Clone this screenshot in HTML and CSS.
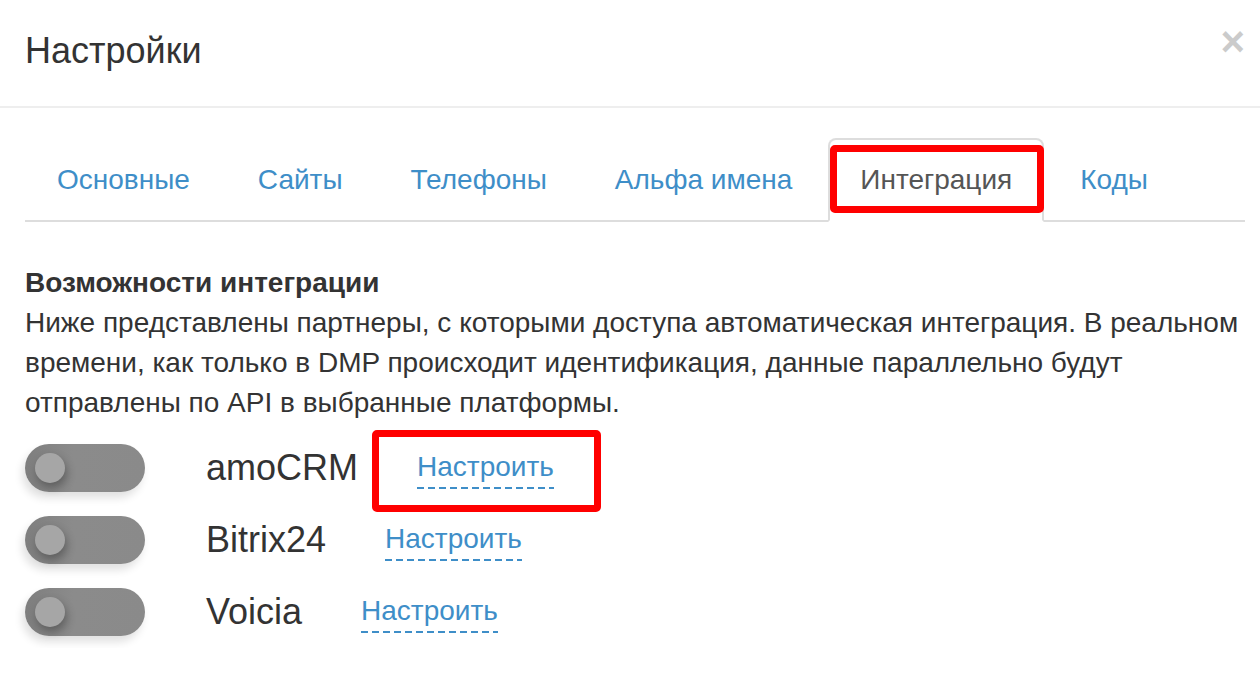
FILE: index.html
```html
<!DOCTYPE html>
<html lang="ru">
<head>
    <meta charset="UTF-8">
    <meta name="viewport" content="width=device-width, initial-scale=1.0">
    <title>Настройки</title>
    <link rel="stylesheet" href="styles.css">
</head>
<body>
<div class="modal">
    <div class="modal-header">
        <h4 class="modal-title">Настройки</h4>
        <button type="button" class="close">&times;</button>
    </div>

    <div class="modal-body">
        <ul class="nav-tabs">
            <li><a href="#">Основные</a></li>
            <li><a href="#">Сайты</a></li>
            <li><a href="#">Телефоны</a></li>
            <li><a href="#">Альфа имена</a></li>
            <li class="active"><a href="#">Интеграция</a><span class="mark mark-tab"></span></li>
            <li><a href="#">Коды</a></li>
        </ul>

        <div class="tab-content">
            <h5>Возможности интеграции</h5>
            <p>Ниже представлены партнеры, с которыми доступа автоматическая интеграция. В реальном времени, как только в DMP происходит идентификация, данные параллельно будут отправлены по API в выбранные платформы.</p>

            <div class="integrations">
                <div class="integration-row">
                    <label class="switch"><input type="checkbox"><span class="slider"></span></label>
                    <span class="partner">amoCRM</span>
                    <span class="setup-wrap">
                        <a href="#" class="setup">Настроить</a>
                        <span class="mark mark-link"></span>
                    </span>
                </div>
                <div class="integration-row">
                    <label class="switch"><input type="checkbox"><span class="slider"></span></label>
                    <span class="partner">Bitrix24</span>
                    <span class="setup-wrap"><a href="#" class="setup">Настроить</a></span>
                </div>
                <div class="integration-row">
                    <label class="switch"><input type="checkbox"><span class="slider"></span></label>
                    <span class="partner">Voicia</span>
                    <span class="setup-wrap"><a href="#" class="setup">Настроить</a></span>
                </div>
            </div>
        </div>
    </div>
</div>
</body>
</html>
```

FILE: styles.css
```css
* {
    margin: 0;
    padding: 0;
    box-sizing: border-box;
}

body {
    font-family: "Liberation Sans", Arial, sans-serif;
    font-size: 28px;
    line-height: 40px;
    color: #333;
    background: #fff;
}

/* шапка окна */
.modal-header {
    display: flex;
    justify-content: space-between;
    align-items: flex-start;
    padding: 25px 15px 29px 25px;
    border-bottom: 2px solid #eee;
}

.modal-title {
    font-size: 36px;
    line-height: 52px;
    font-weight: normal;
    color: #333;
}

.close {
    margin-top: -4px;
    border: 0;
    background: none;
    font-family: "Liberation Sans", Arial, sans-serif;
    font-size: 42px;
    font-weight: bold;
    line-height: 1;
    color: #000;
    opacity: 0.2;
    cursor: pointer;
}

.modal-body {
    padding: 30px 15px 0 25px;
}

/* вкладки */
.nav-tabs {
    display: flex;
    list-style: none;
    border-bottom: 2px solid #ddd;
}

.nav-tabs li {
    position: relative;
    margin-right: 4px;
    margin-bottom: -2px;
}

.nav-tabs li a {
    display: block;
    padding: 20px 30px;
    font-size: 28px;
    line-height: 40px;
    color: #3e8ec8;
    text-decoration: none;
    border: 2px solid transparent;
    border-radius: 8px 8px 0 0;
}

.nav-tabs li.active a {
    color: #555;
    background: #fff;
    border-color: #ddd #ddd transparent;
}

/* красные рамки-пометки поверх скриншота */
.mark {
    position: absolute;
    border: 7px solid #f00;
    border-radius: 5px;
    pointer-events: none;
}

.mark-tab {
    top: 7px;
    left: 2px;
    right: 0;
    bottom: 9px;
}

.mark-link {
    top: -17px;
    left: -45px;
    right: -47px;
    bottom: -23px;
}

.tab-content {
    padding-top: 41px;
}

.tab-content h5 {
    font-size: 28px;
    line-height: 40px;
    font-weight: bold;
}

.integrations {
    margin-top: 9px;
}

.integration-row {
    display: flex;
    align-items: center;
    height: 72px;
}

/* переключатель */
.switch {
    position: relative;
    display: block;
    width: 120px;
    height: 48px;
    flex-shrink: 0;
}

.switch input {
    display: none;
}

.slider {
    position: absolute;
    inset: 0;
    border-radius: 24px;
    background: linear-gradient(to right, #7e7e7e, #8b8b8b 40%, #8a8a8a);
    box-shadow: -3px 6px 8px rgba(0, 0, 0, 0.12);
}

.slider::before {
    content: "";
    position: absolute;
    left: 10px;
    top: 9px;
    width: 30px;
    height: 30px;
    border-radius: 50%;
    background: #a6a6a6;
    box-shadow: 2px 5px 10px rgba(0, 0, 0, 0.3);
}

.partner {
    margin-left: 61px;
    font-size: 36px;
    line-height: 44px;
    color: #333;
}

.setup-wrap {
    position: relative;
    margin-left: 59px;
}

.setup {
    display: inline-block;
    margin-top: 4px;
    padding-bottom: 6px;
    font-size: 28px;
    line-height: 32px;
    color: #3e8ec8;
    text-decoration: none;
    background-image: linear-gradient(to right, #3e8ec8 62%, transparent 62%);
    background-size: 11px 2px;
    background-repeat: repeat-x;
    background-position: left bottom;
}
```
